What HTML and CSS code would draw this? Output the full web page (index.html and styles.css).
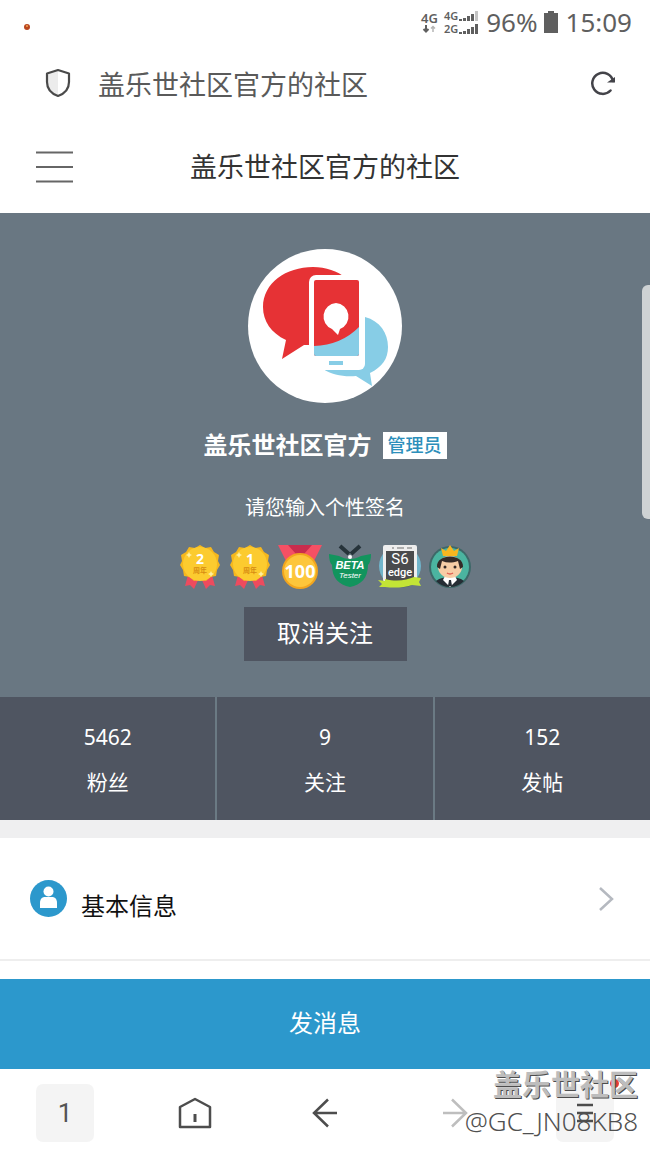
FILE: index.html
```html
<!DOCTYPE html>
<html lang="zh-CN">
<head>
  <meta charset="UTF-8">
  <meta name="viewport" content="width=device-width, initial-scale=1.0">
  <title>盖乐世社区官方的社区</title>
  <link rel="stylesheet" href="styles.css">
</head>

<body>

<!-- status bar -->
<div class="status-bar">
  <svg class="status-dot" width="8" height="8" viewBox="0 0 8 8"><circle cx="4" cy="4" r="3" fill="#b9461f"/><circle cx="4" cy="3" r="1" fill="#f5a552"/></svg>
  <div class="network">
    <span>4G</span>
    <svg width="14" height="8" viewBox="0 0 14 8"><path d="M4 0v6M1.500 4L4 6.500 6.500 4" fill="none" stroke="#5f5f5f" stroke-width="2"/><path d="M11 7V1M9 3.500L11 1.500 13 3.500" fill="none" stroke="#b5b5b5" stroke-width="1.500"/></svg>
  </div>
  <div class="signals">
    <div class="signal"><span>4G</span><svg width="19" height="10" viewBox="0 0 19 10"><path d="M0 8h3v2H0zM4 7h3v3H4zM8 5h3v5H8z" fill="#5f5f5f"/><path d="M12 3h3v7h-3z" fill="#5f5f5f"/><path d="M16 0h3v10h-3z" fill="#c4c4c4"/></svg></div>
    <div class="signal"><span>2G</span><svg width="19" height="10" viewBox="0 0 19 10"><path d="M0 8h3v2H0zM4 7h3v3H4zM8 5h3v5H8zM12 3h3v7h-3zM16 0h3v10h-3z" fill="#5f5f5f"/></svg></div>
  </div>
  <span class="status-text">96%</span>
  <svg class="battery" width="14" height="22" viewBox="0 0 14 22"><path d="M4 0h6v2h4v20H0V2h4z" fill="#5f5f5f"/></svg>
  <span class="status-text">15:09</span>
</div>

<!-- browser address bar -->
<div class="address-bar">
  <svg width="26" height="30" viewBox="0 0 26 30"><path d="M13 2L2 5.500V14c0 7 4 11.500 11 14z" fill="#ececec"/><path d="M13 2l11 3.500V14c0 7-4 11.500-11 14C6 25.500 2 21 2 14V5.500z" fill="none" stroke="#4a4a4a" stroke-width="2.200" stroke-linejoin="round"/></svg>
  <span class="address">盖乐世社区官方的社区</span>
  <button class="icon-button" aria-label="刷新">
    <svg width="26" height="26" viewBox="0 0 26 26"><path d="M20.500 20.500A10.500 10.500 0 1 1 23 11" fill="none" stroke="#434349" stroke-width="2.500" stroke-linecap="round"/><path d="M17 12.500H25V7z" fill="#434349"/></svg>
  </button>
</div>

<header class="page-header">
  <button class="icon-button menu" aria-label="菜单">
    <svg width="37" height="32" viewBox="0 0 37 32"><path d="M0 1.500h37M0 16h37M0 30.500h37" stroke="#666" stroke-width="2"/></svg>
  </button>
  <h1>盖乐世社区官方的社区</h1>
</header>

<section class="profile">
  <svg class="avatar" width="154" height="154" viewBox="0 0 154 154">
    <defs>
      <clipPath id="screen"><rect x="66" y="31" width="45" height="76" rx="2"/></clipPath>
    </defs>
    <circle cx="77" cy="77" r="77" fill="#fff"/>
    <path d="M75 120C105 112 118 92 117 68C132 72 140 84 140 98C140 110 134 118 122 124L124 137L108 127C96 128 84 126 75 120z" fill="#87cde6"/>
    <path d="M65 18C91 18 111 34 111 58C111 82 90 97 62 96L56 96L34 110L38 91C23 84 15 72 15 58C15 34 38 18 65 18z" fill="#e63235"/>
    <path d="M68 26h43a6 6 0 0 1 6 6v83a6 6 0 0 1-6 6H67a6 6 0 0 1-6-6V33a7 7 0 0 1 7-7z" fill="#fff"/>
    <g clip-path="url(#screen)">
      <rect x="66" y="31" width="45" height="76" fill="#e63235"/>
      <path d="M64 97Q94 97 113 76V110H64z" fill="#87cde6"/>
      <path d="M88 54a13.500 13.500 0 0 1 4 26l-2 6-6-6a13.500 13.500 0 0 1 4-26z" fill="#fff"/>
    </g>
    <rect x="81" y="112" width="14" height="4" fill="#87cde6"/>
  </svg>

  <div class="name-row">
    <h2>盖乐世社区官方</h2>
    <span class="role">管理员</span>
  </div>
  <p class="signature">请您输入个性签名</p>

  <div class="medals">
    <svg width="44" height="46" viewBox="0 0 44 46">
      <path d="M10 31L7 42l5-1 4 4 5-11zM34 31l3 11-5-1-4 4-5-11z" fill="#ed4b5e"/>
      <path d="M22 1l5 3 6-1 3 5 5 3-1 6 2 4-3 5-1 6-6 1-4 4-6-2-6 2-4-4-6-1-1-6-3-5 2-4-1-6 5-3 3-5 6 1z" fill="#f5b71e"/>
      <circle cx="22" cy="20" r="17" fill="#fccb2f"/>
      <path d="M11 8l1 2 2 1-2 1-1 2-1-2-2-1 2-1zM33 27l1 2 2 1-2 1-1 2-1-2-2-1 2-1z" fill="#fff0a0"/>
      <text x="22" y="20" class="medal-number">2</text>
      <text x="22" y="29" class="medal-year">周年</text>
    </svg>
    <svg width="44" height="46" viewBox="0 0 44 46">
      <path d="M10 31L7 42l5-1 4 4 5-11zM34 31l3 11-5-1-4 4-5-11z" fill="#ed4b5e"/>
      <path d="M22 1l5 3 6-1 3 5 5 3-1 6 2 4-3 5-1 6-6 1-4 4-6-2-6 2-4-4-6-1-1-6-3-5 2-4-1-6 5-3 3-5 6 1z" fill="#f5b71e"/>
      <circle cx="22" cy="20" r="17" fill="#fccb2f"/>
      <path d="M11 8l1 2 2 1-2 1-1 2-1-2-2-1 2-1zM33 27l1 2 2 1-2 1-1 2-1-2-2-1 2-1z" fill="#fff0a0"/>
      <text x="22" y="20" class="medal-number">1</text>
      <text x="22" y="29" class="medal-year">周年</text>
    </svg>
    <svg width="44" height="46" viewBox="0 0 44 46">
      <path d="M5 1h34l-8 10H13z" fill="#c92c4d"/>
      <path d="M0 1h10l8 9-10 7zM44 1H34l-8 9 10 7z" fill="#f45064"/>
      <circle cx="22" cy="27" r="18" fill="#f2a51e"/>
      <circle cx="22" cy="27" r="16" fill="#fdc63b"/>
      <text x="22" y="34" class="medal-hundred">100</text>
    </svg>
    <svg width="44" height="46" viewBox="0 0 44 46">
      <path d="M1 10l10 2c7 4 15 4 22 0l10-2c0 5-1 9-3 11 0 13-7 20-18 22C11 41 4 34 4 21 2 19 1 15 1 10z" fill="#12945d"/>
      <path d="M12 2l9 8M32 2l-9 8" stroke="#26333a" stroke-width="4"/>
      <circle cx="22" cy="13" r="2" fill="#fff"/>
      <text x="22" y="25" class="beta">BETA</text>
      <text x="22" y="34" class="tester">Tester</text>
    </svg>
    <svg width="44" height="46" viewBox="0 0 44 46">
      <circle cx="22" cy="22" r="21" fill="#70b4ca"/>
      <path d="M7 38h31c-7 7-20 7-31 0z" fill="#35535c"/>
      <rect x="5" y="1" width="34" height="37" rx="2" fill="#eee"/>
      <rect x="8" y="7" width="28" height="31" fill="#4a4b4d"/>
      <path d="M14 4h2M19 4h7M29 4h5" stroke="#999" stroke-width="1.500"/>
      <text x="22" y="20" class="s6">S6</text>
      <text x="22" y="32" class="edge">edge</text>
      <path d="M0 36l7 1v6H1l3-3zM7 35c12 3 22 1 29-2l7 1-2 4 2 4-9-1c-8 3-19 3-27 2z" fill="#c3e536"/>
    </svg>
    <svg width="44" height="46" viewBox="0 0 44 46">
      <circle cx="22" cy="23" r="21" fill="#3d6868"/>
      <circle cx="22" cy="23" r="19" fill="#4bb4a0"/>
      <path d="M8 37c4-3 8-4 14-4s10 1 14 4c-8 8-20 8-28 0z" fill="#252d34"/>
      <path d="M17 32h10l2 4-7 7-7-7z" fill="#fff"/><path d="M21 36h2l1 6h-4z" fill="#252d34"/>
      <ellipse cx="22" cy="23" rx="12" ry="11" fill="#f7cda6"/>
      <path d="M9 23c-1-14 27-14 26 0l-3 2-2-8c-6 2-11 2-16 0l-2 8z" fill="#342a27"/>
      <path d="M15 12L13 4l5 3 4-6 4 6 5-3-2 8z" fill="#f7b620"/>
      <circle cx="17" cy="23" r="1.500" fill="#342a27"/><circle cx="27" cy="23" r="1.500" fill="#342a27"/>
      <path d="M19 29q3 2 6 0" fill="none" stroke="#df5c50" stroke-width="1.500"/>
    </svg>
  </div>

  <button class="unfollow">取消关注</button>
</section>

<section class="stats">
  <a href="#"><span>5462</span><span>粉丝</span></a>
  <a href="#"><span>9</span><span>关注</span></a>
  <a href="#"><span>152</span><span>发帖</span></a>
</section>

<a href="#" class="info-row">
  <svg width="37" height="37" viewBox="0 0 37 37"><circle cx="18.500" cy="18.500" r="18.500" fill="#2c98cc"/><circle cx="18.500" cy="11.500" r="5" fill="#fff"/><path d="M10 28v-5c0-4 2-6 5-6h7c3 0 5 2 5 6v5z" fill="#fff"/></svg>
  <span>基本信息</span>
  <svg class="chevron" width="16" height="24" viewBox="0 0 16 24"><path d="M2 1l12 11L2 23" fill="none" stroke="#b5b9c0" stroke-width="2.500"/></svg>
</a>

<button class="send-message">发消息</button>

<!-- browser toolbar -->
<nav class="toolbar">
  <button class="tool-button boxed">1</button>
  <button class="tool-button" aria-label="主页">
    <svg width="34" height="32" viewBox="0 0 34 32"><path d="M2 10L17 2l15 8v20H2z" fill="none" stroke="#4d4d4d" stroke-width="2.500" stroke-linejoin="round"/><path d="M17 17v8" stroke="#4d4d4d" stroke-width="3"/></svg>
  </button>
  <button class="tool-button" aria-label="后退">
    <svg width="26" height="30" viewBox="0 0 26 30"><path d="M25 15H2M16 1.500L2 15l14 13.500" fill="none" stroke="#4d4d4d" stroke-width="2.500"/></svg>
  </button>
  <button class="tool-button" aria-label="前进">
    <svg width="26" height="30" viewBox="0 0 26 30"><path d="M1 15h23M10 1.500L24 15 10 28.500" fill="none" stroke="#bebebe" stroke-width="2.500"/></svg>
  </button>
  <button class="tool-button boxed" aria-label="更多">
    <svg width="16" height="20" viewBox="0 0 16 20"><path d="M0 2h16M0 10h16M0 18h16" stroke="#4d4d4d" stroke-width="2.500"/></svg>
    <i class="notice"></i>
  </button>
</nav>

<div class="scroll-thumb"></div>

<div class="watermark">
  <strong>盖乐世社区</strong>
  <span>@GC_JN08KB8</span>
</div>

</body>
</html>
```

FILE: styles.css
```css
* {
  box-sizing: border-box;
}

body {
  position: relative;
  margin: 0;
  background: #fff;
  color: #222;
  font-family: "Noto Sans", "Noto Sans CJK SC", sans-serif;
}

h1, h2, p {
  margin: 0;
}

svg {
  display: block;
  flex: none;
}

a {
  color: inherit;
  text-decoration: none;
}

button {
  border: 0;
  padding: 0;
  font-family: inherit;
  cursor: pointer;
}

/* top bars */
.status-bar {
  display: flex;
  align-items: center;
  height: 44px;
  padding: 0 18px 0 23px;
  color: #5f5f5f;
}

.status-dot {
  margin: 10px auto 0 0;
}

.network {
  display: flex;
  flex-direction: column;
  align-items: center;
  margin-right: 6px;
  font-size: 13px;
  font-weight: 600;
  line-height: 14px;
}

.signals {
  display: grid;
  gap: 2px;
  margin-right: 8px;
}

.signal {
  display: flex;
  align-items: center;
  gap: 1px;
  height: 11px;
  font-size: 11px;
  font-weight: 600;
  line-height: 11px;
}

.status-text {
  font-size: 26px;
  line-height: 44px;
}

.battery {
  margin: 0 8px 0 6px;
}

.address-bar {
  display: flex;
  align-items: center;
  height: 78px;
  padding: 0 34px 0 45px;
}

.address {
  flex: 1;
  margin-left: 27px;
  color: #5a5a5a;
  font-family: "Noto Sans CJK SC", sans-serif;
  font-size: 27px;
}

.icon-button {
  background: none;
}

.page-header {
  display: grid;
  grid-template-columns: 1fr auto 1fr;
  align-items: center;
  height: 91px;
  padding: 0 36px 2px;
}

.menu {
  justify-self: start;
}

.page-header h1 {
  padding-bottom: 3px;
  color: #333;
  font-size: 27px;
  font-weight: 400;
}

/* profile */
.profile {
  display: flex;
  flex-direction: column;
  align-items: center;
  padding: 36px 20px;
  background: #697782;
  color: #fff;
}

.name-row {
  display: flex;
  align-items: center;
  gap: 11px;
  margin-top: 24px;
}

.name-row h2 {
  font-size: 24px;
  line-height: 36px;
}

.role {
  padding: 0 5px;
  background: #fff;
  color: #2c8fbb;
  font-size: 18px;
  font-weight: 500;
  line-height: 27px;
}

.signature {
  margin-top: 29px;
  font-size: 20px;
  line-height: 32px;
}

.medals {
  display: flex;
  gap: 6px;
  margin-top: 20px;
}

.medals text {
  fill: #fff;
  text-anchor: middle;
}

.medal-number {
  font-size: 14px;
  font-weight: 700;
}

.medals .medal-year {
  fill: #d78b13;
  font-size: 7px;
  font-weight: 700;
}

.medal-hundred {
  font-size: 18px;
  font-weight: 700;
}

.beta {
  font-family: "Liberation Sans", sans-serif;
  font-size: 11px;
  font-style: italic;
  font-weight: 700;
}

.tester {
  font-family: "Liberation Sans", sans-serif;
  font-size: 8px;
  font-style: italic;
}

.s6 {
  font-family: Roboto, sans-serif;
  font-size: 15px;
}

.edge {
  font-family: Roboto, sans-serif;
  font-size: 11px;
  font-weight: 500;
}

.unfollow {
  width: 163px;
  height: 54px;
  margin-top: 17px;
  padding-bottom: 5px;
  background: #4f5561;
  color: #fff;
  font-size: 24px;
}

.stats {
  display: grid;
  grid-template-columns: repeat(3, 1fr);
  gap: 2px;
  border-bottom: 18px solid #efeff0;
  background: #6b7a84;
}

.stats a {
  display: flex;
  flex-direction: column;
  align-items: center;
  gap: 14px;
  padding: 25px 0 22px;
  background: #4f5561;
  color: #fff;
  font-size: 21px;
  line-height: 31px;
}

.info-row {
  display: flex;
  align-items: center;
  height: 123px;
  padding: 0 36px 0 30px;
  border-bottom: 2px solid #eee;
  color: #111;
  font-size: 24px;
}

.info-row span {
  flex: 1;
  margin: 12px 0 0 14px;
}

.send-message {
  width: 100%;
  height: 90px;
  margin-top: 18px;
  padding-bottom: 5px;
  background: #2c98cc;
  color: #fff;
  font-size: 24px;
}

/* bottom toolbar */
.toolbar {
  display: flex;
  justify-content: space-between;
  padding: 15px 36px 14px;
}

.tool-button {
  position: relative;
  display: flex;
  align-items: center;
  justify-content: center;
  width: 58px;
  height: 58px;
  border-radius: 7px;
  background: none;
  color: #555;
  font-family: Roboto, sans-serif;
  font-size: 26px;
}

.boxed {
  background: #f4f4f4;
}

.notice {
  position: absolute;
  top: -5px;
  right: -5px;
  width: 9px;
  height: 9px;
  border-radius: 50%;
  background: #e83c36;
}

/* things lying over the page */
.scroll-thumb {
  position: absolute;
  top: 285px;
  right: 0;
  width: 8px;
  height: 234px;
  border-radius: 6px 0 0 6px;
  background: #ced2d4;
}

.watermark {
  position: absolute;
  right: 12px;
  bottom: 18px;
  display: flex;
  flex-direction: column;
  align-items: flex-end;
  color: #bdbdbd;
  text-shadow: 1px 1px #4c4c4c;
  pointer-events: none;
}

.watermark strong {
  font-size: 29px;
  line-height: 38px;
}

.watermark span {
  color: #505050;
  font-size: 26px;
  font-weight: 300;
  line-height: 34px;
  text-shadow: none;
}
```
